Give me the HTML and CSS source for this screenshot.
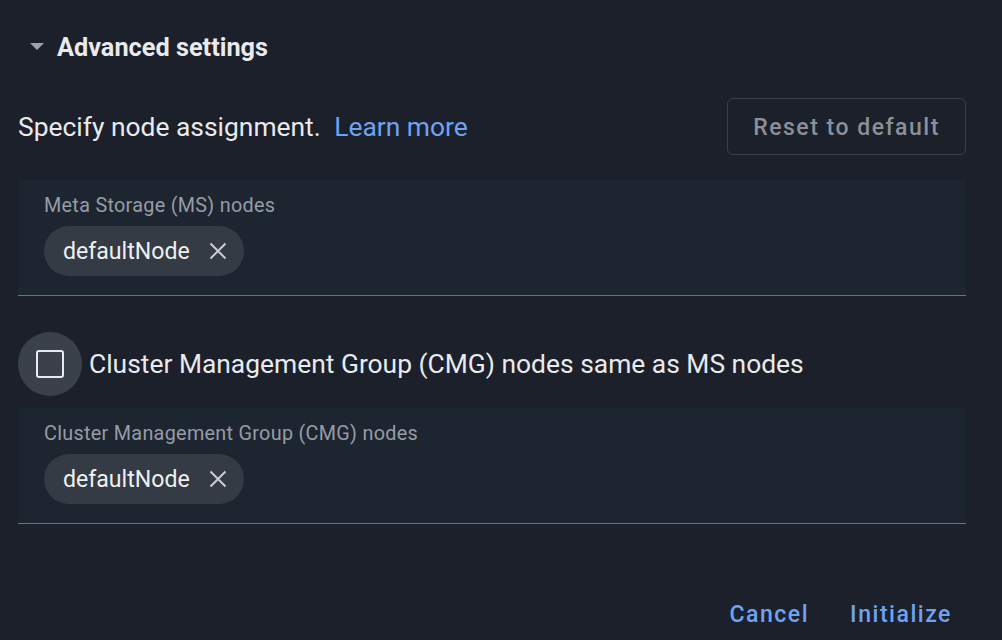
FILE: index.html
```html
<!DOCTYPE html>
<html>
<head>
<meta charset="utf-8">
<link rel="stylesheet" href="styles.css">
</head>
<body>
<div class="panel">
  <div class="section-head">
    <svg class="caret" width="16" height="10" viewBox="0 0 16 10"><polygon points="1,1 15,1 8,8" fill="#a0a4aa"/></svg>
    <span class="section-title">Advanced settings</span>
  </div>

  <div class="intro-row">
    <div class="intro">Specify node assignment. <a class="link" href="#">Learn more</a></div>
    <button class="outline-btn">Reset to default</button>
  </div>

  <div class="field">
    <div class="field-label">Meta Storage (MS) nodes</div>
    <div class="chips">
      <span class="chip">defaultNode
        <svg class="chip-x" width="18" height="18" viewBox="0 0 18 18"><path d="M1.5 1.5 L16.5 16.5 M16.5 1.5 L1.5 16.5" stroke="#c9ccd1" stroke-width="2" fill="none"/></svg>
      </span>
    </div>
  </div>

  <label class="check-row">
    <span class="check-halo"><span class="check-box"></span></span>
    <span class="check-label">Cluster Management Group (CMG) nodes same as MS nodes</span>
  </label>

  <div class="field">
    <div class="field-label">Cluster Management Group (CMG) nodes</div>
    <div class="chips">
      <span class="chip">defaultNode
        <svg class="chip-x" width="18" height="18" viewBox="0 0 18 18"><path d="M1.5 1.5 L16.5 16.5 M16.5 1.5 L1.5 16.5" stroke="#c9ccd1" stroke-width="2" fill="none"/></svg>
      </span>
    </div>
  </div>

  <div class="actions">
    <button class="text-btn">Cancel</button>
    <button class="text-btn">Initialize</button>
  </div>
</div>
</body>
</html>
```

FILE: styles.css
```css
* { box-sizing: border-box; }
html, body {
  margin: 0;
  padding: 0;
  background: #1b202b;
  font-family: Roboto, "Liberation Sans", sans-serif;
  color: #e8eaed;
}
.panel {
  width: 966px;
  padding: 27px 0 0 18px;
}
.section-head {
  display: flex;
  align-items: center;
  height: 40px;
  padding-left: 11px;
}
.caret { margin-right: 12px; }
.section-title {
  font-size: 25.3px;
  font-weight: 700;
  color: #e8eaed;
}
.intro-row {
  display: flex;
  justify-content: space-between;
  align-items: center;
  margin-top: 31px;
}
.intro {
  font-size: 26.4px;
  color: #e8eaed;
}
.link {
  color: #6ea3f2;
  text-decoration: none;
  margin-left: 7px;
}
.outline-btn {
  height: 57px;
  width: 239px;
  padding: 2px 0 0;
  background: transparent;
  border: 1px solid #3a404b;
  border-radius: 6px;
  color: #8b9098;
  font-family: inherit;
  font-size: 23px;
  font-weight: 500;
  letter-spacing: 1.5px;
}
.field {
  margin-top: 25px;
  background: #1d2531;
  border-bottom: 1px solid #6a737b;
  padding: 14px 26px 0;
  height: 116px;
}
.field-label {
  font-size: 19.8px;
  line-height: 24px;
  color: #979ca3;
  letter-spacing: 0.3px;
}
.chips {
  margin-top: 8px;
  display: flex;
}
.chip {
  display: inline-flex;
  align-items: center;
  height: 50px;
  padding: 0 17px 0 19px;
  border-radius: 25px;
  background: #343b44;
  font-size: 23.1px;
  color: #eef0f2;
}
.chip-x { margin-left: 19px; }
.check-row {
  display: flex;
  align-items: center;
  margin-top: 36px;
}
.check-halo {
  width: 64px;
  height: 64px;
  border-radius: 50%;
  background: #3a414b;
  display: flex;
  align-items: center;
  justify-content: center;
}
.check-box {
  width: 28px;
  height: 28px;
  border: 2.5px solid #e8eaed;
  border-radius: 3px;
}
.check-label {
  margin-left: 7px;
  font-size: 26.4px;
  color: #e8eaed;
}
.check-row + .field { margin-top: 12px; }
.actions {
  display: flex;
  justify-content: flex-end;
  gap: 13px;
  margin-top: 71px;
}
.text-btn {
  background: transparent;
  border: none;
  color: #6ea3f2;
  font-family: inherit;
  font-size: 23.1px;
  font-weight: 500;
  letter-spacing: 1.5px;
  padding: 6px 14px;
}
```
